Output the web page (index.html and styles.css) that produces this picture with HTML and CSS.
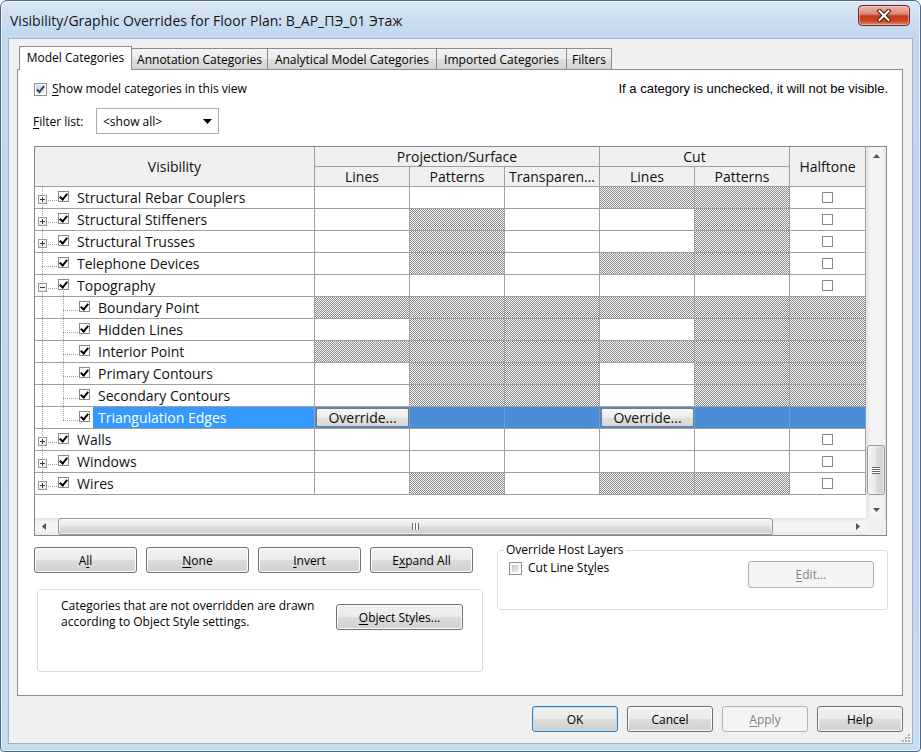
FILE: index.html
```html
<!DOCTYPE html>
<html>
<head>
<meta charset="utf-8">
<title>Visibility/Graphic Overrides</title>
<link rel="stylesheet" href="styles.css">
</head>
<body>
<div class="window">
  <div class="titlebar">
    <span class="title">Visibility/Graphic Overrides for Floor Plan: В_АР_ПЭ_01 Этаж</span>
    <div class="close">
      <svg width="14" height="13" viewBox="0 0 14 13"><path d="M2.5 2 L11.5 11 M11.5 2 L2.5 11" stroke="#4a140b" stroke-width="4.2" stroke-linecap="square"/><path d="M2.5 2 L11.5 11 M11.5 2 L2.5 11" stroke="#fff" stroke-width="2.2" stroke-linecap="square"/></svg>
    </div>
  </div>
  <div class="client">
    <div class="tabs">
      <div class="tab active t-model">Model Categories</div>
      <div class="tab t-annot">Annotation Categories</div>
      <div class="tab t-analyt">Analytical Model Categories</div>
      <div class="tab t-imp">Imported Categories</div>
      <div class="tab t-filt">Filters</div>
    </div>
    <div class="panel">
      <div class="toprow">
        <div class="showrow">
          <span class="w7cb"><svg width="9" height="9" viewBox="0 0 9 9"><path d="M1 4.5 L3.5 7 L8 1.2" fill="none" stroke="#24406e" stroke-width="1.9"/></svg></span>
          <span class="showlbl"><u>S</u>how model categories in this view</span>
        </div>
        <span class="hint">If a category is unchecked, it will not be visible.</span>
      </div>
      <div class="filterrow">
        <span class="flabel"><u>F</u>ilter list:</span>
        <div class="combo"><span>&lt;show all&gt;</span><svg width="9" height="5" viewBox="0 0 9 5"><polygon points="0,0 9,0 4.5,5" fill="#000"/></svg></div>
      </div>
      <div class="table">
        <div class="tmain">
          <div class="grid">
            <div class="c hd r2">Visibility</div>
            <div class="c hd c3">Projection/Surface</div>
            <div class="c hd c2">Cut</div>
            <div class="c hd r2">Halftone</div>
            <div class="c hd">Lines</div>
            <div class="c hd">Patterns</div>
            <div class="c hd">Transparen…</div>
            <div class="c hd">Lines</div>
            <div class="c hd">Patterns</div>

            <div class="c vis t-top"><span class="g1"><i class="exp plus"></i></span><i class="cb on"></i><span class="lbl">Structural Rebar Couplers</span></div>
            <div class="c"></div><div class="c"></div><div class="c"></div><div class="c h"></div><div class="c h"></div><div class="c hc"><i class="cb"></i></div>

            <div class="c vis t-top"><span class="g1"><i class="exp plus"></i></span><i class="cb on"></i><span class="lbl">Structural Stiffeners</span></div>
            <div class="c"></div><div class="c h"></div><div class="c"></div><div class="c"></div><div class="c h"></div><div class="c hc"><i class="cb"></i></div>

            <div class="c vis t-top"><span class="g1"><i class="exp plus"></i></span><i class="cb on"></i><span class="lbl">Structural Trusses</span></div>
            <div class="c"></div><div class="c h"></div><div class="c"></div><div class="c"></div><div class="c h"></div><div class="c hc"><i class="cb"></i></div>

            <div class="c vis t-top"><span class="g1"></span><i class="cb on"></i><span class="lbl">Telephone Devices</span></div>
            <div class="c"></div><div class="c h"></div><div class="c"></div><div class="c h"></div><div class="c h"></div><div class="c hc"><i class="cb"></i></div>

            <div class="c vis t-parent"><span class="g1"><i class="exp"></i></span><i class="cb on"></i><span class="lbl">Topography</span></div>
            <div class="c"></div><div class="c"></div><div class="c"></div><div class="c"></div><div class="c"></div><div class="c hc"><i class="cb"></i></div>

            <div class="c vis t-child"><span class="g1"></span><span class="g2"></span><i class="cb on"></i><span class="lbl">Boundary Point</span></div>
            <div class="c h"></div><div class="c h"></div><div class="c h"></div><div class="c h"></div><div class="c h"></div><div class="c h"></div>

            <div class="c vis t-child"><span class="g1"></span><span class="g2"></span><i class="cb on"></i><span class="lbl">Hidden Lines</span></div>
            <div class="c"></div><div class="c h"></div><div class="c h"></div><div class="c"></div><div class="c h"></div><div class="c h"></div>

            <div class="c vis t-child"><span class="g1"></span><span class="g2"></span><i class="cb on"></i><span class="lbl">Interior Point</span></div>
            <div class="c h"></div><div class="c h"></div><div class="c h"></div><div class="c h"></div><div class="c h"></div><div class="c h"></div>

            <div class="c vis t-child"><span class="g1"></span><span class="g2"></span><i class="cb on"></i><span class="lbl">Primary Contours</span></div>
            <div class="c"></div><div class="c h"></div><div class="c h"></div><div class="c"></div><div class="c h"></div><div class="c h"></div>

            <div class="c vis t-child"><span class="g1"></span><span class="g2"></span><i class="cb on"></i><span class="lbl">Secondary Contours</span></div>
            <div class="c"></div><div class="c h"></div><div class="c h"></div><div class="c"></div><div class="c h"></div><div class="c h"></div>

            <div class="c vis t-clast sel"><span class="g1"></span><span class="g2"></span><i class="cb on"></i><span class="lbl">Triangulation Edges</span></div>
            <div class="c selc"><button class="ovr">Override...</button></div><div class="c selc"></div><div class="c selc"></div><div class="c selc"><button class="ovr">Override...</button></div><div class="c selc"></div><div class="c selc"></div>

            <div class="c vis t-top"><span class="g1"><i class="exp plus"></i></span><i class="cb on"></i><span class="lbl">Walls</span></div>
            <div class="c"></div><div class="c"></div><div class="c"></div><div class="c"></div><div class="c"></div><div class="c hc"><i class="cb"></i></div>

            <div class="c vis t-top"><span class="g1"><i class="exp plus"></i></span><i class="cb on"></i><span class="lbl">Windows</span></div>
            <div class="c"></div><div class="c"></div><div class="c"></div><div class="c"></div><div class="c"></div><div class="c hc"><i class="cb"></i></div>

            <div class="c vis t-last"><span class="g1"><i class="exp plus"></i></span><i class="cb on"></i><span class="lbl">Wires</span></div>
            <div class="c"></div><div class="c h"></div><div class="c"></div><div class="c h"></div><div class="c h"></div><div class="c hc"><i class="cb"></i></div>
          </div>
          <div class="vs">
            <div class="sarrow"><svg width="7" height="4" viewBox="0 0 7 4"><polygon points="0,4 3.5,0 7,4" fill="#555"/></svg></div>
            <div class="vtrack"><div class="vthumb"><span class="vgrip"></span></div></div>
            <div class="sarrow"><svg width="7" height="4" viewBox="0 0 7 4"><polygon points="0,0 7,0 3.5,4" fill="#555"/></svg></div>
          </div>
        </div>
        <div class="hsrow">
          <div class="hs">
            <div class="harrow"><svg width="4" height="7" viewBox="0 0 4 7"><polygon points="4,0 4,7 0,3.5" fill="#555"/></svg></div>
            <div class="htrack"><div class="hthumb"><span class="hgrip"></span></div></div>
            <div class="harrow"><svg width="4" height="7" viewBox="0 0 4 7"><polygon points="0,0 0,7 4,3.5" fill="#555"/></svg></div>
          </div>
          <div class="corner"></div>
        </div>
      </div>
      <div class="lower">
        <div class="lower-left">
          <div class="btnrow">
            <button class="btn wbtn">A<u>l</u>l</button>
            <button class="btn wbtn"><u>N</u>one</button>
            <button class="btn wbtn"><u>I</u>nvert</button>
            <button class="btn wbtn">E<u>x</u>pand All</button>
          </div>
          <div class="infobox">
            <p class="infotext">Categories that are not overridden are drawn<br>according to Object Style settings.</p>
            <button class="btn objbtn"><u>O</u>bject Styles...</button>
          </div>
        </div>
        <fieldset class="group">
          <legend>Override Host Layers</legend>
          <div class="grow">
            <div class="cutrow"><span class="w7cb off"></span><span>Cut Line St<u>y</u>les</span></div>
            <button class="btn dis editbtn"><u>E</u>dit...</button>
          </div>
        </fieldset>
      </div>
    </div>
    <div class="footer">
      <button class="btn fbtn def">OK</button>
      <button class="btn fbtn">Cancel</button>
      <button class="btn fbtn dis"><u>A</u>pply</button>
      <button class="btn fbtn">Help</button>
    </div>
    <div class="griprow">
      <svg width="9" height="9" viewBox="0 0 9 9">
        <g fill="#fff"><rect x="7" y="2" width="2" height="2"/><rect x="7" y="5" width="2" height="2"/><rect x="4" y="5" width="2" height="2"/><rect x="7" y="8" width="2" height="1"/><rect x="4" y="8" width="2" height="1"/><rect x="1" y="8" width="2" height="1"/></g>
        <g fill="#a9b1ba"><rect x="6" y="1" width="2" height="2"/><rect x="6" y="4" width="2" height="2"/><rect x="3" y="4" width="2" height="2"/><rect x="6" y="7" width="2" height="2"/><rect x="3" y="7" width="2" height="2"/><rect x="0" y="7" width="2" height="2"/></g>
      </svg>
    </div>
  </div>
</div>
</body>
</html>
```
FILE: styles.css
```css
* { box-sizing: border-box; }
html, body { margin: 0; padding: 0; }
body {
  width: 921px; height: 752px; overflow: hidden;
  font-family: "Open Sans", sans-serif; font-size: 12px; color: #000;
  background: #fff;
  --dv: repeating-linear-gradient(180deg, #a3a3a3 0 1px, transparent 1px 2px);
  --dh: repeating-linear-gradient(90deg, #a3a3a3 0 1px, transparent 1px 2px);
}
u { text-decoration: underline; text-underline-offset: 2px; }

.window {
  width: 921px; height: 752px;
  display: flex; flex-direction: column;
  padding: 0 7px 7px;
  border: 1px solid #4f6883;
  border-radius: 7px 7px 4px 4px;
  background: linear-gradient(180deg, #dae7f5 0, #c3d8ef 32px, #bfd5ee 60%, #c7dbf1 100%);
  box-shadow: inset 0 0 0 1px rgba(255,255,255,.55);
}
.titlebar { height: 37px; flex: none; display: flex; align-items: flex-start; }
.title { margin: 10px 0 0 2px; font-size: 14px; line-height: 19px; color: #151515; white-space: nowrap; }
.close {
  margin: 4px 3px 0 auto; width: 52px; height: 21px;
  border: 1px solid #6e2a1c; border-radius: 4px;
  background: linear-gradient(180deg, #ebb5a8 0%, #da8873 42%, #c3391d 52%, #c84a2c 80%, #df9271 100%);
  box-shadow: inset 0 0 0 1px rgba(255,225,215,.45);
  display: flex; align-items: center; justify-content: center;
}

.client {
  flex: 1; background: #f0f0f0;
  border: 1px solid #9fb4cc;
  display: flex; flex-direction: column;
}
.tabs {
  height: 30px; flex: none; display: flex; align-items: flex-end;
  padding-left: 10px; position: relative; z-index: 1;
}
.tab {
  height: 21px; border: 1px solid #898c95; border-bottom: 0; margin-left: -1px;
  display: flex; align-items: center; justify-content: center;
  background: linear-gradient(180deg, #f3f3f3, #ebebeb 50%, #dedede 50%, #d3d3d3);
  white-space: nowrap; font-size: 12px;
}
.tab.active { height: 24px; margin-bottom: -1px; margin-left: 0; background: #fff; padding-bottom: 3px; }
.t-model { width: 113px; }
.t-annot { width: 137px; }
.t-analyt { width: 170px; }
.t-imp { width: 131px; }
.t-filt { width: 46px; }

.panel {
  height: 627px; flex: none; margin: 0 9px 0 8px;
  border: 1px solid #898c95; background: #fff;
  display: flex; flex-direction: column;
}
.toprow { display: flex; align-items: center; justify-content: space-between; padding: 12px 14px 0 16px; height: 26px; }
.showrow { display: flex; align-items: center; }
.showlbl { margin-left: 5px; line-height: 14px; }
.hint { font-family: "Liberation Sans", sans-serif; font-size: 13px; line-height: 15px; margin-top: -1px; }

.w7cb {
  width: 13px; height: 13px; flex: none;
  border: 1px solid #8e8f8f; padding: 1px;
  background: linear-gradient(135deg, #cdd3db, #f6f7f9) content-box, #fff;
  display: flex; align-items: center; justify-content: center;
}
.w7cb.off { background: linear-gradient(135deg, #c4c4c4, #f3f3f3) content-box, #fff; padding: 2px; }

.filterrow { display: flex; align-items: center; margin-top: 12px; padding-left: 15px; height: 26px; }
.flabel { width: 63px; }
.combo {
  width: 123px; height: 26px; border: 1px solid #abadb3; background: #fff;
  display: flex; align-items: center; justify-content: space-between; padding: 0 6px 0 6px;
}

.table {
  margin: 12px 0 0 16px; width: 853px; height: 390px; flex: none;
  border: 1px solid #828790; display: flex; flex-direction: column; background: #fff;
}
.tmain { display: flex; height: 371px; }
.grid {
  width: 831px; display: grid;
  grid-template-columns: 280px repeat(5, 95px) 76px;
  grid-template-rows: 20px 20px repeat(14, 22px);
  align-content: start;
}
.c { border-right: 1px solid #a0a0a0; border-bottom: 1px solid #a0a0a0; background: #fff; overflow: hidden; min-width: 0; }
.hd {
  background: #f0f0f0; display: flex; align-items: center; justify-content: center;
  font-size: 14px; line-height: 18px; white-space: nowrap; color: #111;
}
.r2 { grid-row: span 2; }
.c3 { grid-column: span 3; }
.c2 { grid-column: span 2; }
.h { background: repeating-conic-gradient(#8a8a8a 0 25%, #f8f8f8 0 50%) 0 0 / 2px 2px; }
.hc { display: flex; justify-content: center; align-items: flex-start; }
.hc .cb { margin-top: 5px; }

.vis { display: flex; align-items: flex-start; }
.g1 { width: 23px; height: 21px; flex: none; }
.g2 { width: 21px; height: 21px; flex: none; }
.exp {
  display: block; width: 9px; height: 9px; margin: 8px 0 0 3px;
  border: 1px solid #999;
  background: linear-gradient(#3a3a3a, #3a3a3a) center / 5px 1px no-repeat, linear-gradient(180deg, #fff, #e9e9e9);
}
.exp.plus {
  background: linear-gradient(#3a3a3a, #3a3a3a) center / 5px 1px no-repeat, linear-gradient(#3a3a3a, #3a3a3a) center / 1px 5px no-repeat, linear-gradient(180deg, #fff, #e9e9e9);
}
.cb {
  display: flex; justify-content: center; align-items: flex-start;
  width: 11px; height: 11px; flex: none; margin-top: 4px;
  border: 1px solid #8a8a8a; background: #fff;
}
.cb.on::after {
  content: ""; display: block; width: 3px; height: 6px; margin-top: 0;
  border: solid #000; border-width: 0 2px 2px 0; transform: rotate(40deg);
}
.lbl { margin-left: 8px; line-height: 21px; font-size: 14px; white-space: nowrap; color: #111; }

.t-top { background: var(--dh) 7px 13px / 16px 1px no-repeat, var(--dv) 7px 0 / 1px 100% no-repeat, #fff; }
.t-last { background: var(--dh) 7px 13px / 16px 1px no-repeat, var(--dv) 7px 0 / 1px 14px no-repeat, #fff; }
.t-parent { background: var(--dh) 7px 13px / 16px 1px no-repeat, var(--dv) 7px 0 / 1px 100% no-repeat, var(--dv) 28px 16px / 1px 6px no-repeat, #fff; }
.t-child { background: var(--dv) 7px 0 / 1px 100% no-repeat, var(--dv) 28px 0 / 1px 100% no-repeat, var(--dh) 28px 13px / 16px 1px no-repeat, #fff; }
.t-clast { background: var(--dv) 7px 0 / 1px 100% no-repeat, var(--dv) 28px 0 / 1px 14px no-repeat, var(--dh) 28px 13px / 16px 1px no-repeat, #fff; }

.sel .lbl {
  flex: 1; align-self: stretch; background: #3399ff; color: #fff;
  margin-left: 3px; padding-left: 5px;
}
.selc { background: #4a8cd6; border-right-color: #6c9fd6; }
.ovr {
  display: block; margin: 1px 0 0 1px; width: 93px; height: 19px; padding: 0;
  border: 1px solid #7a7a7a; border-radius: 2px;
  background: linear-gradient(180deg, #f7f7f7, #ececec 50%, #e0e0e0 50%, #d8d8d8);
  font-family: "Open Sans", sans-serif; font-size: 14px; line-height: 16px; color: #111;
}

.vs {
  width: 20px; display: flex; flex-direction: column;
  background: linear-gradient(90deg, #e4e4e4, #f4f4f4 25%, #f4f4f4 75%, #e8e8e8);
}
.sarrow { height: 17px; flex: none; display: flex; align-items: center; justify-content: center; }
.vtrack { flex: 1; display: flex; flex-direction: column; }
.vthumb {
  margin: 281px 1px 0 1px; height: 50px;
  border: 1px solid #959595; border-radius: 3px;
  background: linear-gradient(90deg, #f4f4f4, #e9e9e9 45%, #dadada 55%, #d0d0d0);
  box-shadow: inset 0 0 0 1px rgba(255,255,255,.6);
  display: flex; align-items: center; justify-content: center;
}
.vgrip { width: 8px; height: 7px; background: repeating-linear-gradient(180deg, #6a6a6a 0 1px, #fafafa 1px 2px); }

.hsrow { display: flex; height: 17px; }
.hs {
  width: 831px; display: flex;
  background: linear-gradient(180deg, #e4e4e4, #f4f4f4 25%, #f4f4f4 75%, #e8e8e8);
}
.harrow { width: 17px; flex: none; display: flex; align-items: center; justify-content: center; }
.htrack { flex: 1; display: flex; }
.hthumb {
  margin: 0 0 0 6px; width: 715px;
  border: 1px solid #959595; border-radius: 3px;
  background: linear-gradient(180deg, #f4f4f4, #e9e9e9 45%, #dadada 55%, #d0d0d0);
  box-shadow: inset 0 0 0 1px rgba(255,255,255,.6);
  display: flex; align-items: center; justify-content: center;
}
.hgrip { width: 7px; height: 7px; background: repeating-linear-gradient(90deg, #6a6a6a 0 1px, #fafafa 1px 3px); }
.corner { flex: 1; background: #f0f0f0; }

.btn {
  font-family: "Open Sans", sans-serif; font-size: 12px; color: #000;
  height: 26px; padding: 0;
  border: 1px solid #707070; border-radius: 3px;
  background: linear-gradient(180deg, #f2f2f2 0, #ebebeb 49%, #dddddd 50%, #cfcfcf 100%);
  box-shadow: inset 0 0 0 1px #fcfcfc;
  display: flex; align-items: center; justify-content: center;
}
.btn.def { border-color: #3c7fb1; box-shadow: inset 0 0 0 1px #b6def6; }
.btn.dis { border-color: #adb2b5; background: #f4f4f4; color: #838383; box-shadow: none; }

.lower { display: flex; margin-top: 7px; padding-left: 16px; }
.lower-left { width: 449px; flex: none; padding-top: 4px; }
.btnrow { display: flex; gap: 9px; }
.wbtn { width: 103px; }
.infobox {
  margin: 16px 0 0 3px; width: 446px; height: 83px;
  border: 1px solid #d5dfe5; border-radius: 3px;
  display: flex; align-items: flex-start; padding: 8px 19px 0 23px;
}
.infotext { margin: 0; line-height: 16px; }
.objbtn { width: 127px; margin: 6px 0 0 auto; }

.group {
  margin: 0 0 0 14px; padding: 0 13px 0 6px; width: 391px; height: 67px; min-width: 0;
  border: 1px solid #d5dfe5; border-radius: 3px;
}
.group legend { padding: 0 2px; font-size: 12px; line-height: 14px; }
.grow { display: flex; justify-content: space-between; align-items: flex-start; margin-top: 4px; }
.cutrow { display: flex; align-items: center; margin: 0 0 0 5px; line-height: 14px; }
.cutrow .w7cb { margin-right: 6px; }
.editbtn { width: 126px; height: 27px; }

.footer { display: flex; justify-content: flex-end; gap: 9px; margin-top: 10px; padding-right: 9px; flex: none; }
.fbtn { width: 86px; }
.griprow { display: flex; justify-content: flex-end; margin-top: 1px; padding-right: 1px; height: 9px; flex: none; }
```
